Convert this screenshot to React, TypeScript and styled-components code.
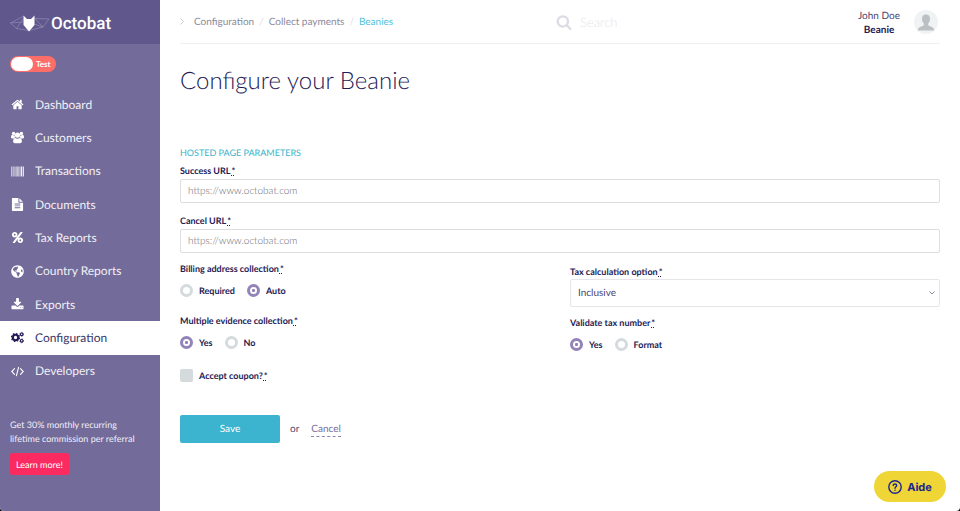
import React, { useState } from "react";
import styled, { createGlobalStyle, css } from "styled-components";
import { FaGlobeAmericas } from "react-icons/fa";

const navy = "#241a55";
const font = `Lato, "Open Sans", sans-serif`;

const Global = createGlobalStyle`
  *, *::before, *::after { box-sizing: border-box; }
  html { background: #000; }
  body {
    margin: 0;
    color: ${navy};
    font-family: ${font};
    font-size: 10px;
    text-rendering: geometricPrecision;
  }
  button, input, select { font-family: inherit; text-rendering: inherit; }
`;

const Page = styled.div`
  display: flex;
  min-height: 100vh;
  background: #fff;
  border-radius: 0 0 4px 4px;
  overflow: hidden;
`;

const Sidebar = styled.aside`
  flex: 0 0 160px;
  background: #736b9a;
  color: #fff;
`;

const Brand = styled.a`
  display: flex;
  align-items: center;
  height: 44px;
  padding: 4px 10px 0;
  background: #60578c;
  color: #fff;
  text-decoration: none;
`;

const BrandText = styled.span`
  margin-left: 1px;
  font: 500 17px/20px Roboto, sans-serif;
`;

const ModeSwitch = styled.label`
  display: flex;
  align-items: center;
  width: 46px;
  height: 16px;
  margin: 12px 10px 16px;
  padding: 1px;
  border-radius: 8px;
  background: #fd6e68;
  font-size: 8px;
  font-weight: 700;
  cursor: pointer;
`;

const ModeInput = styled.input`
  appearance: none;
  width: 22px;
  height: 14px;
  margin: 0 3px 0 0;
  border-radius: 7px;
  background: #fff;
`;

const Nav = styled.nav`
  display: flex;
  flex-direction: column;
  height: 300px;
`;

const NavLink = styled.a<{ $active?: boolean }>`
  flex: 1;
  display: flex;
  align-items: center;
  gap: 11px;
  padding: 0 10px 0 11px;
  color: ${(p) => (p.$active ? navy : "#fff")};
  background: ${(p) => (p.$active ? "#fff" : "transparent")};
  font-size: 12px;
  line-height: 20px;
  text-decoration: none;

  svg {
    flex: 0 0 auto;
    width: 13px;
    height: 13px;
  }
`;

const NavText = styled.span`
  opacity: 0.9;
`;

const Promo = styled.div`
  padding: 30px 10px 0;
  color: #f1eff7;
  font-size: 9px;
  line-height: 14px;
`;

const PromoText = styled.p`
  margin: 0 0 7px;
`;

const PromoButton = styled.button`
  height: 22px;
  padding: 0 6px;
  border: 0;
  border-radius: 2px;
  background: #fb2b62;
  color: #fff;
  font-size: 9px;
`;

const Main = styled.main`
  flex: 1;
  min-width: 0;
  padding: 0 20px;
`;

const Header = styled.header`
  display: grid;
  grid-template-columns: 1fr 1fr;
  align-items: center;
  height: 44px;
  border-bottom: 1px solid #eeeff1;
`;

const Crumbs = styled.nav`
  display: flex;
  align-items: center;
  gap: 5px;
  color: #dcdce2;
  font-size: 10px;
  line-height: 14px;
`;

const Crumb = styled.a<{ $current?: boolean }>`
  color: ${(p) => (p.$current ? "#4fc1da" : "#8b8998")};
  text-decoration: none;
`;

const CrumbArrow = styled.svg`
  width: 4px;
  height: 7px;
  margin-right: 5px;
`;

const HeaderRight = styled.div`
  display: flex;
  align-items: center;
  justify-content: space-between;
  gap: 12px;
`;

const Search = styled.label`
  display: flex;
  align-items: center;
  gap: 8px;
  margin-left: -4px;
  color: #dddce4;

  svg {
    width: 16px;
    height: 16px;
  }
`;

const SearchInput = styled.input`
  width: 160px;
  padding: 0;
  border: 0;
  outline: 0;
  background: transparent;
  color: ${navy};
  font-size: 13px;
  font-weight: 300;

  &::placeholder {
    color: #e6e5ec;
    opacity: 1;
  }
`;

const Account = styled.div`
  display: flex;
  align-items: center;
  gap: 14px;
  padding-right: 2px;
`;

const AccountName = styled.div`
  padding-top: 2px;
  color: #4b4470;
  font-size: 10px;
  line-height: 14px;
  text-align: center;

  strong {
    display: block;
    color: ${navy};
  }
`;

const Avatar = styled.svg`
  width: 24px;
  height: 24px;
`;

const Title = styled.h1`
  margin: 22px 0 50px;
  font-size: 24px;
  line-height: 30px;
  font-weight: 300;
`;

const SectionTitle = styled.h2`
  margin: 0 0 6px;
  color: #37b3cb;
  font-size: 9px;
  line-height: 13px;
  font-weight: 400;
`;

const labelText = css`
  color: ${navy};
  font-size: 9px;
  line-height: 12px;
  font-weight: 700;
`;

const Label = styled.label`
  ${labelText}
  display: block;
`;

const Required = styled.abbr`
  margin-left: 1px;
  text-decoration: underline dotted 1px;
  text-underline-offset: 1px;
`;

const Field = styled.div`
  margin-bottom: 12px;
`;

const TextInput = styled.input`
  display: block;
  width: 100%;
  height: 24px;
  margin-top: 2px;
  padding: 0 7px;
  border: 1px solid #dddde2;
  border-radius: 2px;
  color: ${navy};
  font-size: 10px;
  font-weight: 300;

  &::placeholder {
    color: #66666e;
    opacity: 1;
  }
`;

const Columns = styled.div`
  display: grid;
  grid-template-columns: 1fr 1fr;
  gap: 20px;
  margin-top: -2px;
`;

const Column = styled.div<{ $lower?: boolean }>`
  padding-top: ${(p) => (p.$lower ? 3 : 0)}px;
`;

const RadioSet = styled.fieldset`
  min-width: 0;
  margin: 0 0 18px;
  padding: 0;
  border: 0;
`;

const Legend = styled.legend`
  ${labelText}
  padding: 0;
`;

const Options = styled.div`
  display: flex;
  gap: 12px;
  padding-top: 9px;
`;

const Option = styled.label`
  ${labelText}
  display: flex;
  align-items: center;
  gap: 6px;
`;

const CouponOption = styled(Option)`
  margin-top: 20px;
`;

const Radio = styled.input`
  appearance: none;
  display: grid;
  place-items: center;
  width: 13px;
  height: 13px;
  margin: 0;
  border: 3px solid #d5dadd;
  border-radius: 50%;
  background: #fff;

  &:checked {
    border-color: #9283b8;
  }

  &:checked::before {
    content: "";
    width: 3px;
    height: 3px;
    border-radius: 1px;
    background: #9283b8;
  }
`;

const CheckBox = styled.input`
  appearance: none;
  width: 13px;
  height: 13px;
  margin: 0;
  border-radius: 2px;
  background: #d5dadd;

  &:checked {
    background: #9283b8;
  }
`;

const SelectWrap = styled.div`
  display: grid;
  align-items: center;
  margin: 1px 0 10px;

  > * {
    grid-area: 1 / 1;
  }

  svg {
    justify-self: end;
    width: 6px;
    height: 4px;
    margin-right: 5px;
    pointer-events: none;
  }
`;

const Select = styled.select`
  appearance: none;
  width: 100%;
  height: 28px;
  padding: 0 7px;
  border: 1px solid #e6e6ea;
  border-radius: 2px;
  background: #fff;
  color: #4b4470;
  font-size: 10px;
`;

const Actions = styled.div`
  display: flex;
  align-items: center;
  gap: 10px;
  padding-top: 33px;
  color: #4b4470;
  font-size: 10px;
  line-height: 14px;
`;

const SaveButton = styled.button`
  width: 100px;
  height: 28px;
  border: 0;
  border-radius: 2px;
  background: #3cb3cf;
  color: #fff;
  font-size: 10px;
`;

const CancelLink = styled.a`
  margin-left: 2px;
  border-bottom: 1px dashed #8d83b5;
  color: #766d9e;
  text-decoration: none;
`;

const HelpButton = styled.button`
  position: fixed;
  right: 14px;
  bottom: 9px;
  display: flex;
  align-items: center;
  justify-content: center;
  gap: 5px;
  width: 72px;
  height: 31px;
  border: 0;
  border-radius: 16px;
  background: #efd536;
  color: #1b2590;
  font: 700 11px/14px Inter, sans-serif;

  svg {
    width: 14px;
    height: 14px;
  }
`;

const Icon = ({ d }: { d: string }) => (
  <svg viewBox="0 0 1792 1792" fill="currentColor" aria-hidden="true">
    <path d={d} />
  </svg>
);

const HOME =
  "M1472 992v480q0 26-19 45t-45 19h-384v-384h-256v384h-384q-26 0-45-19t-19-45v-480q0-1 .5-3t.5-3l575-474 575 474q1 2 1 6zm223-69l-62 74q-8 9-21 11h-3q-13 0-21-7l-692-577-692 577q-12 8-24 7-13-2-21-11l-62-74q-8-10-7-23.5t11-21.5l719-599q32-26 76-26t76 26l244 204v-195q0-14 9-23t23-9h192q14 0 23 9t9 23v408l219 182q10 8 11 21.5t-7 23.5z";
const FILE =
  "M1596 476q14 14 28 36h-472v-472q22 14 36 28zm-476 164h544v1056q0 40-28 68t-68 28h-1344q-40 0-68-28t-28-68v-1600q0-40 28-68t68-28h800v544q0 40 28 68t68 28zm160 736v-64q0-14-9-23t-23-9h-704q-14 0-23 9t-9 23v64q0 14 9 23t23 9h704q14 0 23-9t9-23zm0-256v-64q0-14-9-23t-23-9h-704q-14 0-23 9t-9 23v64q0 14 9 23t23 9h704q14 0 23-9t9-23zm0-256v-64q0-14-9-23t-23-9h-704q-14 0-23 9t-9 23v64q0 14 9 23t23 9h704q14 0 23-9t9-23z";
const PERCENT =
  "M1408 1280q0-52-38-90t-90-38-90 38-38 90 38 90 90 38 90-38 38-90zm-768-768q0-52-38-90t-90-38-90 38-38 90 38 90 90 38 90-38 38-90zm1024 768q0 159-112.5 271.5t-271.5 112.5-271.5-112.5-112.5-271.5 112.5-271.5 271.5-112.5 271.5 112.5 112.5 271.5zm-77-1088q0 20-13 38l-1056 1408q-19 26-51 26h-160q-26 0-45-19t-19-45q0-20 13-38l1056-1408q19-26 51-26h160q26 0 45 19t19 45zm-691 320q0 159-112.5 271.5t-271.5 112.5-271.5-112.5-112.5-271.5 112.5-271.5 271.5-112.5 271.5 112.5 112.5 271.5z";
const DOWNLOAD =
  "M1344 1344q0-26-19-45t-45-19-45 19-19 45 19 45 45 19 45-19 19-45zm256 0q0-26-19-45t-45-19-45 19-19 45 19 45 45 19 45-19 19-45zm128-224v320q0 40-28 68t-68 28h-1472q-40 0-68-28t-28-68v-320q0-40 28-68t68-28h465l135 136q58 56 136 56t136-56l136-136h464q40 0 68 28t28 68zm-325-569q17 41-14 70l-448 448q-18 19-45 19t-45-19l-448-448q-31-29-14-70 17-39 59-39h256v-448q0-26 19-45t45-19h256q26 0 45 19t19 45v448h256q42 0 59 39z";
const SEARCH =
  "M1216 832q0-185-131.5-316.5t-316.5-131.5-316.5 131.5-131.5 316.5 131.5 316.5 316.5 131.5 316.5-131.5 131.5-316.5zm512 832q0 52-38 90t-90 38q-54 0-90-38l-343-342q-179 124-399 124-143 0-273.5-55.5t-225-150-150-225-55.5-273.5 55.5-273.5 150-225 225-150 273.5-55.5 273.5 55.5 225 150 150 225 55.5 273.5q0 220-124 399l343 343q37 37 37 90z";

const BarcodeIcon = () => (
  <svg viewBox="0 0 13 13" fill="currentColor" aria-hidden="true">
    <path d="M0 1.500h.6v10H0zM1.200 1.500h.3v10h-.3zM2.200 1.500h.5v10h-.5zM3.600 1.500h.4v10h-.4zM4.600 1.500h.9v10h-.9zM6.200 1.500h.6v10h-.6zM7.500 1.500h.9v10h-.9zM9 1.500h.4v10H9zM10 1.500h.9v10H10zM11.400 1.500h.3v10h-.3zM12.200 1.500h.8v10h-.8z" />
  </svg>
);

const UsersIcon = () => (
  <svg viewBox="0 0 13 13" fill="currentColor" aria-hidden="true">
    <circle cx="2.600" cy="2.400" r="1.700" />
    <circle cx="10.400" cy="2.400" r="1.700" />
    <circle cx="6.500" cy="4.100" r="2.600" />
    <path d="M1.300 3.800c.8.6 1.700.7 2.300.4 0 1 .3 1.700.9 2.400-.8 0-1.400.3-1.900.9H1.500C.6 7.500 0 7 0 6.200c0-.9.300-2.300 1.300-2.400zM11.700 3.800c-.8.6-1.700.7-2.300.4 0 1-.3 1.700-.9 2.400.8 0 1.400.3 1.900.9h1.100c.9 0 1.500-.5 1.500-1.300 0-.9-.3-2.300-1.300-2.400zM4.300 6.900c1.300 1.100 3.100 1.100 4.400 0 1.700 0 2.200 1.700 2.200 3.400 0 1.200-.7 2-1.900 2H4c-1.200 0-1.900-.8-1.900-2 0-1.700.5-3.400 2.200-3.400z" />
  </svg>
);

const CogsIcon = () => (
  <svg viewBox="0 0 13 13" fill="none" stroke="currentColor" aria-hidden="true">
    <circle cx="4.500" cy="6.500" r="2.700" strokeWidth="2.100" />
    <circle cx="4.500" cy="6.500" r="4" strokeWidth="1.200" strokeDasharray="1.570 1.570" />
    <circle cx="10.700" cy="3.300" r="1.300" strokeWidth="1.100" />
    <circle cx="10.700" cy="3.300" r="2" strokeWidth=".7" strokeDasharray="1.047 1.047" />
    <circle cx="10.700" cy="9.800" r="1.300" strokeWidth="1.100" />
    <circle cx="10.700" cy="9.800" r="2" strokeWidth=".7" strokeDasharray="1.047 1.047" />
  </svg>
);

const CodeIcon = () => (
  <svg viewBox="0 0 13 13" fill="none" stroke="currentColor" strokeWidth="1.100" strokeLinecap="round" aria-hidden="true">
    <path d="M3.500 3.700.8 6.500l2.700 2.800M9.500 3.700l2.700 2.800-2.700 2.800M7.600 2.300 5.400 10.700" />
  </svg>
);

const Logo = () => (
  <svg width="40" height="18" viewBox="0 0 40 18" aria-hidden="true">
    <path
      d="M13 1.500 0.500 8l6 5.500L19 15.500M0.500 8l12.500-1M6.500 13.500 13 4M25 3.500 39 4 33 12 19 15.500M25 3.500l8 8.500M24 9l9 3"
      fill="none"
      stroke="#8d85b0"
      strokeWidth=".8"
    />
    <path d="M13.500 0.500 17 4h4l3.500-3.500V10L19 16.500 13.500 10z" fill="#fff" />
  </svg>
);

const items = [
  { name: "Dashboard", icon: <Icon d={HOME} /> },
  { name: "Customers", icon: <UsersIcon /> },
  { name: "Transactions", icon: <BarcodeIcon /> },
  { name: "Documents", icon: <Icon d={FILE} /> },
  { name: "Tax Reports", icon: <Icon d={PERCENT} /> },
  { name: "Country Reports", icon: <FaGlobeAmericas /> },
  { name: "Exports", icon: <Icon d={DOWNLOAD} /> },
  { name: "Configuration", icon: <CogsIcon />, active: true },
  { name: "Developers", icon: <CodeIcon /> },
];

const Star = () => <Required title="required">*</Required>;

function RadioField({ legend, name, options, initial }: { legend: string; name: string; options: string[]; initial: string }) {
  const [value, setValue] = useState(initial);
  return (
    <RadioSet>
      <Legend>
        {legend}
        <Star />
      </Legend>
      <Options>
        {options.map((o) => (
          <Option key={o}>
            <Radio type="radio" name={name} checked={value === o} onChange={() => setValue(o)} />
            {o}
          </Option>
        ))}
      </Options>
    </RadioSet>
  );
}

export default function App() {
  return (
    <>
      <Global />
      <Page>
        <Sidebar>
          <Brand href="#">
            <Logo />
            <BrandText>Octobat</BrandText>
          </Brand>
          <ModeSwitch>
            <ModeInput type="checkbox" role="switch" />
            Test
          </ModeSwitch>
          <Nav>
            {items.map((i) => (
              <NavLink key={i.name} href="#" $active={i.active}>
                {i.icon}
                <NavText>{i.name}</NavText>
              </NavLink>
            ))}
          </Nav>
          <Promo>
            <PromoText>
              Get 30% monthly recurring
              <br />
              lifetime commission per referral
            </PromoText>
            <PromoButton type="button">Learn more!</PromoButton>
          </Promo>
        </Sidebar>
        <Main>
          <Header>
            <Crumbs aria-label="Breadcrumb">
              <CrumbArrow viewBox="0 0 4 7" fill="none" stroke="#c9c9d0" aria-hidden="true">
                <path d="m.5.5 3 3-3 3" />
              </CrumbArrow>
              <Crumb href="#">Configuration</Crumb>
              <span>/</span>
              <Crumb href="#">Collect payments</Crumb>
              <span>/</span>
              <Crumb href="#" $current>
                Beanies
              </Crumb>
            </Crumbs>
            <HeaderRight>
              <Search>
                <Icon d={SEARCH} />
                <SearchInput type="search" aria-label="Search" placeholder="Search" />
              </Search>
              <Account>
                <AccountName>
                  John Doe
                  <strong>Beanie</strong>
                </AccountName>
                <Avatar viewBox="0 0 24 24" aria-hidden="true">
                  <circle cx="12" cy="12" r="12" fill="#f0f3f4" />
                  <path
                    d="M12 4.500c2.600 0 4 1.600 4 4.200 0 2.300-.9 3.800-1.800 4.700v1.600c.4 1.500 5.800 1.200 6 5.500H3.800c.2-4.300 5.600-4 6-5.500v-1.600C8.900 12.500 8 11 8 8.700c0-2.600 1.400-4.200 4-4.200z"
                    fill="#bcc0c2"
                  />
                </Avatar>
              </Account>
            </HeaderRight>
          </Header>
          <Title>Configure your Beanie</Title>
          <form onSubmit={(e) => e.preventDefault()}>
            <SectionTitle>HOSTED PAGE PARAMETERS</SectionTitle>
            <Field>
              <Label htmlFor="success">
                Success URL
                <Star />
              </Label>
              <TextInput id="success" type="url" placeholder="https://www.octobat.com" />
            </Field>
            <Field>
              <Label htmlFor="cancel">
                Cancel URL
                <Star />
              </Label>
              <TextInput id="cancel" type="url" placeholder="https://www.octobat.com" />
            </Field>
            <Columns>
              <Column>
                <RadioField legend="Billing address collection" name="billing" options={["Required", "Auto"]} initial="Auto" />
                <RadioField legend="Multiple evidence collection" name="evidence" options={["Yes", "No"]} initial="Yes" />
                <CouponOption>
                  <CheckBox type="checkbox" />
                  <span>
                    Accept coupon?
                    <Star />
                  </span>
                </CouponOption>
              </Column>
              <Column $lower>
                <Label htmlFor="tax">
                  Tax calculation option
                  <Star />
                </Label>
                <SelectWrap>
                  <Select id="tax" defaultValue="Inclusive">
                    <option>Inclusive</option>
                    <option>Exclusive</option>
                  </Select>
                  <svg viewBox="0 0 6 4" fill="none" stroke="#8d8aa0" aria-hidden="true">
                    <path d="m.5.5 2.500 2.500L5.500.5" />
                  </svg>
                </SelectWrap>
                <RadioField legend="Validate tax number" name="validate" options={["Yes", "Format"]} initial="Yes" />
              </Column>
            </Columns>
            <Actions>
              <SaveButton type="submit">Save</SaveButton>
              <span>or</span>
              <CancelLink href="#">Cancel</CancelLink>
            </Actions>
          </form>
        </Main>
      </Page>
      <HelpButton type="button">
        <svg viewBox="0 0 14 14" fill="none" stroke="currentColor" strokeWidth="1.400" strokeLinecap="round" aria-hidden="true">
          <circle cx="7" cy="7" r="6.200" />
          <path d="M5.300 5.600C5.300 3.300 8.700 3.500 8.700 5.500 8.700 6.800 7 6.800 7 8.200" />
          <path d="M7 10.200v.1" />
        </svg>
        Aide
      </HelpButton>
    </>
  );
}
